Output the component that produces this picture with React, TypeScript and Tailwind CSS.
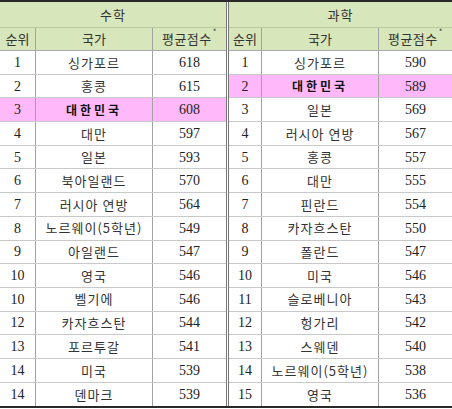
import React from 'react';

type Row = { rank: string; country: string; score: string; highlight?: boolean };

const math: Row[] = [
  { rank: '1', country: '싱가포르', score: '618' },
  { rank: '2', country: '홍콩', score: '615' },
  { rank: '3', country: '대한민국', score: '608', highlight: true },
  { rank: '4', country: '대만', score: '597' },
  { rank: '5', country: '일본', score: '593' },
  { rank: '6', country: '북아일랜드', score: '570' },
  { rank: '7', country: '러시아 연방', score: '564' },
  { rank: '8', country: '노르웨이(5학년)', score: '549' },
  { rank: '9', country: '아일랜드', score: '547' },
  { rank: '10', country: '영국', score: '546' },
  { rank: '10', country: '벨기에', score: '546' },
  { rank: '12', country: '카자흐스탄', score: '544' },
  { rank: '13', country: '포르투갈', score: '541' },
  { rank: '14', country: '미국', score: '539' },
  { rank: '14', country: '덴마크', score: '539' },
];

const science: Row[] = [
  { rank: '1', country: '싱가포르', score: '590' },
  { rank: '2', country: '대한민국', score: '589', highlight: true },
  { rank: '3', country: '일본', score: '569' },
  { rank: '4', country: '러시아 연방', score: '567' },
  { rank: '5', country: '홍콩', score: '557' },
  { rank: '6', country: '대만', score: '555' },
  { rank: '7', country: '핀란드', score: '554' },
  { rank: '8', country: '카자흐스탄', score: '550' },
  { rank: '9', country: '폴란드', score: '547' },
  { rank: '10', country: '미국', score: '546' },
  { rank: '11', country: '슬로베니아', score: '543' },
  { rank: '12', country: '헝가리', score: '542' },
  { rank: '13', country: '스웨덴', score: '540' },
  { rank: '14', country: '노르웨이(5학년)', score: '538' },
  { rank: '15', country: '영국', score: '536' },
];

const kr = "font-['Noto_Sans_CJK_KR',sans-serif]";
const num = "font-['Liberation_Serif','Noto_Sans_CJK_KR',serif]";

function RankTable({ title, rows, cols }: { title: string; rows: Row[]; cols: string }) {
  return (
    <div className="flex flex-col">
      <div className={`h-[26px] flex items-center justify-center bg-[#d7e6bb] border-b border-[#b9c9a0] text-[13px] text-[#333] tracking-[1px] ${kr}`}>
        {title}
      </div>
      <div className={`grid ${cols} h-[23px] bg-[#d7e6bb] border-b border-[#a9a9a9] text-[13px] text-[#333] ${kr}`}>
        <div className="flex items-center justify-center border-r border-[#a3a3a3]">순위</div>
        <div className="flex items-center justify-center border-r border-[#a3a3a3]">국가</div>
        <div className="flex items-center justify-center tracking-[0.5px]">
          평균점수<sup className="text-[8px] -mt-[6px] ml-[1px]">*</sup>
        </div>
      </div>
      {rows.map((r, i) => (
        <div
          key={i}
          className={`grid ${cols} h-[23.7px] ${i < rows.length - 1 ? 'border-b border-[#c8c8c8]' : ''} ${
            r.highlight ? 'bg-[#ffb9fb]' : 'bg-white'
          } text-[#222]`}
        >
          <div className={`flex items-center justify-center border-r border-[#a3a3a3] text-[14px] ${num}`}>{r.rank}</div>
          <div
            className={`flex items-center justify-center border-r border-[#a3a3a3] ${kr} ${
              r.highlight ? 'text-[12px] font-bold tracking-[3px] text-[#111]' : 'text-[13px] tracking-[1px] text-[#333]'
            }`}
          >
            {r.country}
          </div>
          <div className={`flex items-center justify-center text-[14px] ${num}`}>{r.score}</div>
        </div>
      ))}
    </div>
  );
}

export default function App() {
  return (
    <div className="w-[452px] h-[409px] bg-white">
      <div className="flex border-t-2 border-b-2 border-[#2a2a2a]">
        <div className="w-[226px]">
          <RankTable title="수학" rows={math} cols="grid-cols-[36px_117px_73px]" />
        </div>
        <div className="w-[3px] border-l border-r border-[#777]" />
        <div className="w-[223px]">
          <RankTable title="과학" rows={science} cols="grid-cols-[33px_117px_73px]" />
        </div>
      </div>
    </div>
  );
}
